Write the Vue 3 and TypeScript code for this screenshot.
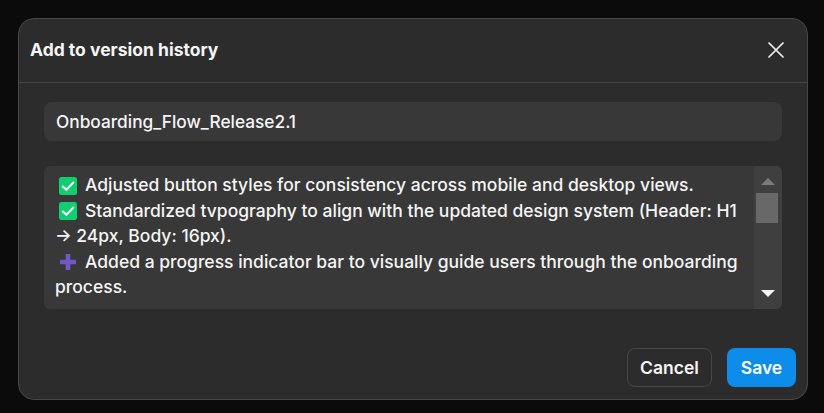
<script setup lang="ts">
interface Line { icon?: 'check' | 'plus'; text: string }
const lines: Line[] = [
  { icon: 'check', text: 'Adjusted button styles for consistency across mobile and desktop views.' },
  { icon: 'check', text: 'Standardized tvpography to align with the updated design system (Header: H1' },
  { text: '→ 24px, Body: 16px).' },
  { icon: 'plus', text: 'Added a progress indicator bar to visually guide users through the onboarding' },
  { text: 'process.' },
]
</script>

<template>
  <div class="page">
    <section class="modal">
      <header class="head">
        <h1 class="title">Add to version history</h1>
        <button class="close" aria-label="Close">
          <svg width="18" height="18" viewBox="0 0 18 18" fill="none" stroke="#f2f2f2" stroke-width="1.7" stroke-linecap="round">
            <path d="M2 2 16 16M16 2 2 16" />
          </svg>
        </button>
      </header>
      <div class="body">
        <div class="field">Onboarding_Flow_Release2.1</div>
        <div class="notes">
          <div class="notes-text">
            <div v-for="(l, i) in lines" :key="i" class="line">
              <svg v-if="l.icon === 'check'" class="ico" width="18" height="18" viewBox="0 0 18 18">
                <rect width="18" height="18" rx="2.5" fill="#10cf6f" />
                <path d="M3.8 9.5 7.4 12.8 14.2 5.6" fill="none" stroke="#fff" stroke-width="2.1" stroke-linecap="round" stroke-linejoin="round" />
              </svg>
              <svg v-else-if="l.icon === 'plus'" class="ico" width="18" height="18" viewBox="0 0 18 18">
                <path d="M9 1v16M1 9h16" fill="none" stroke="#7357c4" stroke-width="4.6" />
              </svg>
              <span>{{ l.text }}</span>
            </div>
          </div>
          <div class="scrollbar">
            <svg class="arrow" width="14" height="7" viewBox="0 0 14 7"><path d="M7 0 14 7H0Z" fill="#7a7a7a" /></svg>
            <div class="thumb"></div>
            <div class="spacer"></div>
            <svg class="arrow" width="14" height="7" viewBox="0 0 14 7"><path d="M0 0H14L7 7Z" fill="#f5f5f5" /></svg>
          </div>
        </div>
      </div>
      <footer class="foot">
        <button class="btn cancel">Cancel</button>
        <button class="btn save">Save</button>
      </footer>
    </section>
  </div>
</template>

<style>
html, body { margin: 0; background: #0b0b0b; }
</style>

<style scoped>
.page {
  width: 824px;
  height: 413px;
  box-sizing: border-box;
  padding: 18px 16px 13px 18px;
  background: #0b0b0b;
  font-family: Inter, "Noto Sans", sans-serif;
  color: #f5f5f5;
  overflow: hidden;
}
.modal {
  width: 790px;
  height: 382px;
  box-sizing: border-box;
  background: #2c2c2c;
  border: 1px solid #484848;
  border-radius: 16px;
  display: flex;
  flex-direction: column;
}
.head {
  height: 64px;
  flex: none;
  box-sizing: border-box;
  border-bottom: 1px solid #464646;
  padding: 0 22px 2px 11px;
  display: flex;
  align-items: center;
  justify-content: space-between;
}
.title { margin: 0; font-size: 17.5px; font-weight: 700; color: #f5f5f5; }
.close { padding: 0; border: 0; background: none; display: flex; }
.body {
  padding: 19px 25px 0;
  display: flex;
  flex-direction: column;
  gap: 25px;
}
.field {
  height: 39px;
  box-sizing: border-box;
  padding: 0 12px;
  border-radius: 8px;
  background: #383838;
  display: flex;
  align-items: center;
  font-size: 17.3px;
  font-weight: 500;
}
.notes {
  height: 143px;
  border-radius: 6px;
  background: #383838;
  display: flex;
  overflow: hidden;
}
.notes-text {
  flex: 1;
  padding: 6px 0 0 11px;
  font-size: 17.5px;
  line-height: 25.5px;
  font-weight: 500;
  white-space: nowrap;
}
.line { height: 25.5px; display: flex; align-items: center; }
.ico { flex: none; margin: 2px 8px 0 4px; }
.scrollbar {
  width: 28px;
  flex: none;
  box-sizing: border-box;
  background: #3f3f3f;
  padding: 12px 0 12px;
  display: flex;
  flex-direction: column;
  align-items: center;
}
.thumb { width: 22px; height: 30px; margin: 8px 2px 0 0; background: #686868; }
.spacer { flex: 1; }
.foot {
  margin-top: 39px;
  padding-right: 11px;
  display: flex;
  justify-content: flex-end;
  gap: 15px;
}
.btn {
  height: 39px;
  box-sizing: border-box;
  border-radius: 8px;
  font-family: inherit;
  font-size: 17.5px;
  font-weight: 600;
  color: #f5f5f5;
  padding: 0;
}
.cancel { width: 85px; background: transparent; border: 1px solid #484848; }
.save { width: 69px; background: #0d8ce9; border: 0; color: #fff; font-weight: 600; }
</style>
